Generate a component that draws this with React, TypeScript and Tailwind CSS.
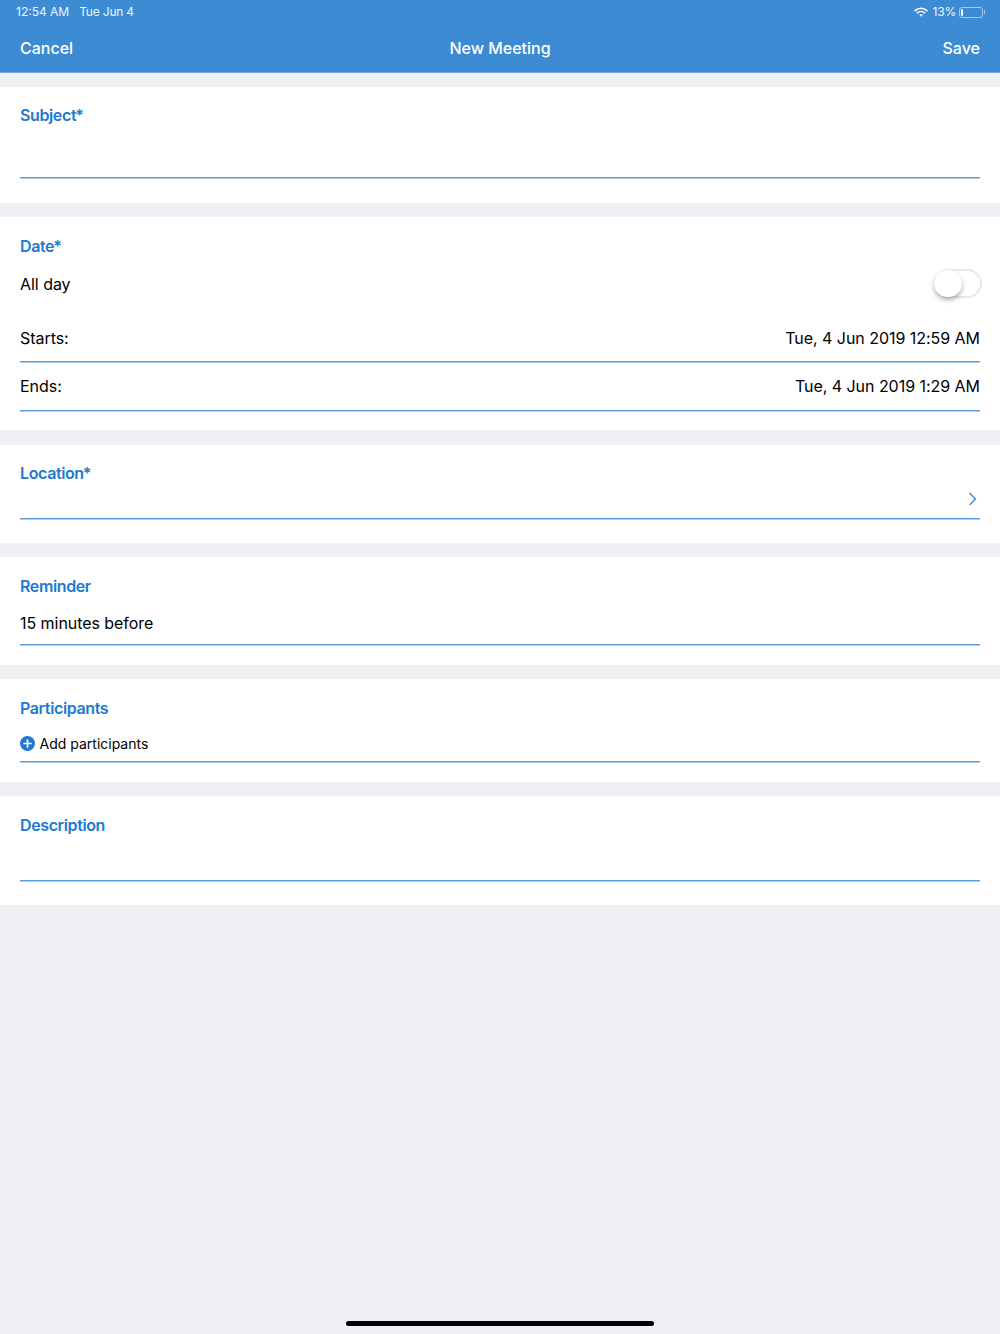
import React from "react";

function Label({ children, star }: { children: React.ReactNode; star?: boolean }) {
  return (
    <div className="text-[16px] leading-[20px] font-semibold text-[#2079cf] tracking-[-0.38px]">
      {children}
      {star && <span className="ml-[-1px]">*</span>}
    </div>
  );
}

export default function App() {
  return (
    <div className="w-[1000px] h-[1334px] bg-[#efeff4] flex flex-col font-['Inter','Noto_Sans',sans-serif] text-black overflow-hidden">
      <header className="h-[73px] shrink-0 bg-[#3d8bd3] border-b border-[#6ea6dc] text-white flex flex-col">
        <div className="h-[24px] pl-[16px] pr-[15px] flex items-center justify-between text-[12px] text-[#eef5fc]">
          <div className="flex gap-[10px]">
            <span>12:54 AM</span>
            <span className="tracking-[-0.2px]">Tue Jun 4</span>
          </div>
          <div className="flex items-center">
            <svg width="14" height="10" viewBox="0 0 15 11" fill="none" stroke="white" strokeLinecap="round" className="mr-[5px]">
              <path d="M1 4 A9.5 9.5 0 0 1 14 4" strokeWidth="1.8" />
              <path d="M3.6 6.4 A5.8 5.8 0 0 1 11.4 6.4" strokeWidth="1.8" />
              <path d="M7.5 10.2 L6 8.6 A2.2 2.2 0 0 1 9 8.6 Z" fill="white" strokeWidth="0.5" />
            </svg>
            <span className="tracking-[-0.2px] mr-[3px]">13%</span>
            <div className="flex items-center">
              <div className="w-[24px] h-[11px] rounded-[3px] border border-[#a5c8ea] p-[1px] flex">
                <div className="w-[2px] bg-white rounded-[1px]" />
              </div>
              <div className="w-[1px] h-[4px] bg-[#a5c8ea] ml-[1px]" />
            </div>
          </div>
        </div>
        <div className="flex-1 px-[20px] pb-[1px] grid grid-cols-3 items-center text-[16px] font-medium">
          <span>Cancel</span>
          <span className="text-center">New Meeting</span>
          <span className="text-right">Save</span>
        </div>
      </header>

      <section className="mt-[14px] h-[116px] bg-white px-[20px] pt-[18px] shrink-0">
        <Label star>Subject</Label>
        <div className="h-[53px] border-b border-[#5b9ddb] shadow-[0_1px_0_#a9cdee]" />
      </section>

      <section className="mt-[14px] h-[213px] bg-white px-[20px] pt-[19px] shrink-0 text-[16px] tracking-[-0.04px]">
        <Label star>Date</Label>
        <div className="mt-[12px] h-[32px] flex items-center justify-between">
          <span>All day</span>
          <div className="relative w-[48px] h-[29px] mr-[-2px] mt-[-1px] rounded-full border-2 border-[#e8e8e8] bg-white">
            <div className="absolute left-[-2px] top-[-1px] w-[28px] h-[27px] rounded-full bg-white shadow-[0_3px_5px_rgba(0,0,0,0.3)]" />
          </div>
        </div>
        <div className="h-[62px] pt-[15px] flex items-center justify-between border-b border-[#5b9ddb] shadow-[0_1px_0_#a9cdee]">
          <span>Starts:</span>
          <span>Tue, 4 Jun 2019 12:59 AM</span>
        </div>
        <div className="h-[49px] flex items-center justify-between border-b border-[#5b9ddb] shadow-[0_1px_0_#a9cdee]">
          <span>Ends:</span>
          <span>Tue, 4 Jun 2019 1:29 AM</span>
        </div>
      </section>

      <section className="mt-[15px] h-[98px] bg-white px-[20px] pt-[18px] shrink-0">
        <Label star>Location</Label>
        <div className="h-[36px] pb-[3px] flex items-center justify-end border-b border-[#5b9ddb] shadow-[0_1px_0_#a9cdee] pr-[3px]">
          <svg width="9" height="14" viewBox="0 0 9 14" fill="none" stroke="#3d8bd3" strokeWidth="1.4">
            <path d="M1.5 1 L7.5 7 L1.5 13" />
          </svg>
        </div>
      </section>

      <section className="mt-[14px] h-[108px] bg-white px-[20px] pt-[19px] shrink-0">
        <Label>Reminder</Label>
        <div className="h-[49px] pt-[5px] flex items-center text-[16px] tracking-[-0.05px] border-b border-[#5b9ddb] shadow-[0_1px_0_#a9cdee]">15 minutes before</div>
      </section>

      <section className="mt-[14px] h-[103px] bg-white px-[20px] pt-[19px] shrink-0">
        <Label>Participants</Label>
        <div className="h-[44px] pt-[8px] flex items-center gap-[4.5px] text-[14px] border-b border-[#5b9ddb] shadow-[0_1px_0_#a9cdee]">
          <svg width="15" height="15" viewBox="0 0 15 15">
            <circle cx="7.5" cy="7.5" r="7.5" fill="#2079cf" />
            <path d="M7.5 4 V11 M4 7.5 H11" stroke="white" strokeWidth="1.7" strokeLinecap="round" />
          </svg>
          <span>Add participants</span>
        </div>
      </section>

      <section className="mt-[14px] h-[109px] bg-white px-[20px] pt-[19px] shrink-0">
        <Label>Description</Label>
        <div className="h-[46px] border-b border-[#5b9ddb] shadow-[0_1px_0_#a9cdee]" />
      </section>

      <div className="flex-1 flex items-end justify-center pb-[8px]">
        <div className="w-[308px] h-[5px] bg-black rounded-full" />
      </div>
    </div>
  );
}
